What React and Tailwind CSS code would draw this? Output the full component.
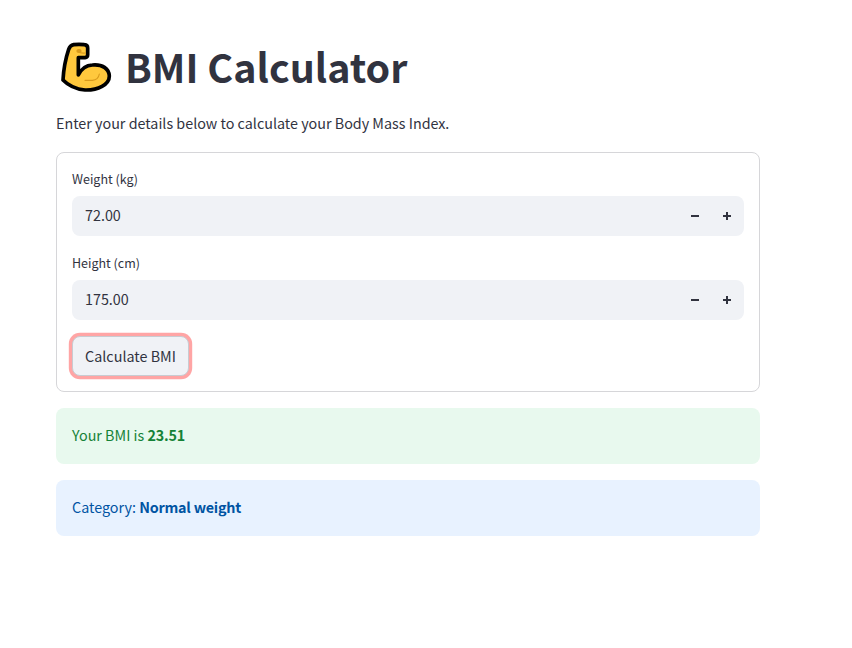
import { useState } from 'react';

function FlexedArm() {
  return (
    <svg viewBox="31 30 156 156" className="h-[52px] w-[52px] shrink-0" aria-hidden="true">
      <path
        d="M72 38 Q88 36 104 38 Q114 39 114 48 V68 Q114 76 106 77 H86 V129 Q100 100 128 99 C158 96 178 110 179 132 C179 158 145 175 106 174 Q65 170 40 144 C42 107 49 76 57 52 Q61 40 72 38 Z"
        fill="#ffc83d"
        stroke="#000"
        strokeWidth="11"
        strokeLinejoin="round"
      />
      <ellipse cx="88" cy="57" rx="8" ry="6" fill="#d99a1c" />
      <path d="M86 61 Q92 64 109 63" fill="none" stroke="#d99a1c" strokeWidth="3.5" />
      <path d="M106 145 H128 Q146 144 149 126" fill="none" stroke="#d99a1c" strokeWidth="3.5" strokeLinecap="round" />
    </svg>
  );
}

function NumberField({ label, value, onChange }) {
  const step = (amount) => onChange((Number(value) + amount).toFixed(2));

  return (
    <label className="block">
      <span className="mb-1 flex h-6 items-center pb-0.5 text-[12.5px]">{label}</span>
      <span className="flex h-10 items-center rounded-lg bg-[#f0f2f6] pr-px">
        <input
          value={value}
          onChange={(e) => onChange(e.target.value)}
          className="h-10 min-w-0 flex-1 bg-transparent pb-[3px] pl-[13px] text-[14.33px] outline-none"
        />
        <button type="button" onClick={() => step(-0.01)} aria-label="Decrease" className="flex h-10 w-8 items-center justify-center">
          <svg viewBox="0 0 8 8" className="h-2 w-2" shapeRendering="crispEdges">
            <path d="M0 3h8v2H0z" fill="#31333f" />
          </svg>
        </button>
        <button type="button" onClick={() => step(0.01)} aria-label="Increase" className="flex h-10 w-8 items-center justify-center">
          <svg viewBox="0 0 8 8" className="h-2 w-2" shapeRendering="crispEdges">
            <path d="M0 3h3V0h2v3h3v2H5v3H3V5H0z" fill="#31333f" />
          </svg>
        </button>
      </span>
    </label>
  );
}

function getCategory(bmi) {
  if (bmi < 18.5) return 'Underweight';
  if (bmi < 25) return 'Normal weight';
  if (bmi < 30) return 'Overweight';
  return 'Obese';
}

export default function App() {
  const [weight, setWeight] = useState('72.00');
  const [height, setHeight] = useState('175.00');
  const [bmi, setBmi] = useState(72 / 1.75 ** 2);

  const handleSubmit = (e) => {
    e.preventDefault();
    setBmi(Number(weight) / (Number(height) / 100) ** 2);
  };

  return (
    <main className="min-h-screen bg-white pl-14 pt-10 font-['Noto_Sans_CJK_SC',sans-serif] text-[14.33px] text-[#31333f]">
      <div className="flex w-[704px] flex-col gap-4">
        {/* Title */}
        <h1 className="flex h-14 items-center pl-1 text-[39.4px] leading-none font-bold">
          <FlexedArm />
          <span className="ml-[13px] pb-1 whitespace-nowrap">BMI Calculator</span>
        </h1>
        <p className="h-6 leading-[22px]">Enter your details below to calculate your Body Mass Index.</p>

        {/* Form */}
        <form onSubmit={handleSubmit} className="flex flex-col gap-4 rounded-lg border border-[#d6d6d9] p-[15px]">
          <NumberField label="Weight (kg)" value={weight} onChange={setWeight} />
          <NumberField label="Height (cm)" value={height} onChange={setHeight} />
          <button
            type="submit"
            className="flex h-10 w-[117px] items-center justify-center rounded-lg border border-[#c8cbd1] bg-[#f0f2f6] whitespace-nowrap shadow-[0_0_0_3.2px_#ffa5a5]"
          >
            Calculate BMI
          </button>
        </form>

        {/* Result */}
        <div className="flex h-14 items-center rounded-lg bg-[#e8f9ee] px-4 pb-0.5 text-[#158237]">
          <p>
            Your BMI is <strong className="tracking-[-0.01em]">{bmi.toFixed(2)}</strong>
          </p>
        </div>
        <div className="flex h-14 items-center rounded-lg bg-[#e8f2ff] px-4 pb-0.5 text-[#0054a3]">
          <p>
            Category: <strong className="tracking-[-0.015em]">{getCategory(bmi)}</strong>
          </p>
        </div>
      </div>
    </main>
  );
}
